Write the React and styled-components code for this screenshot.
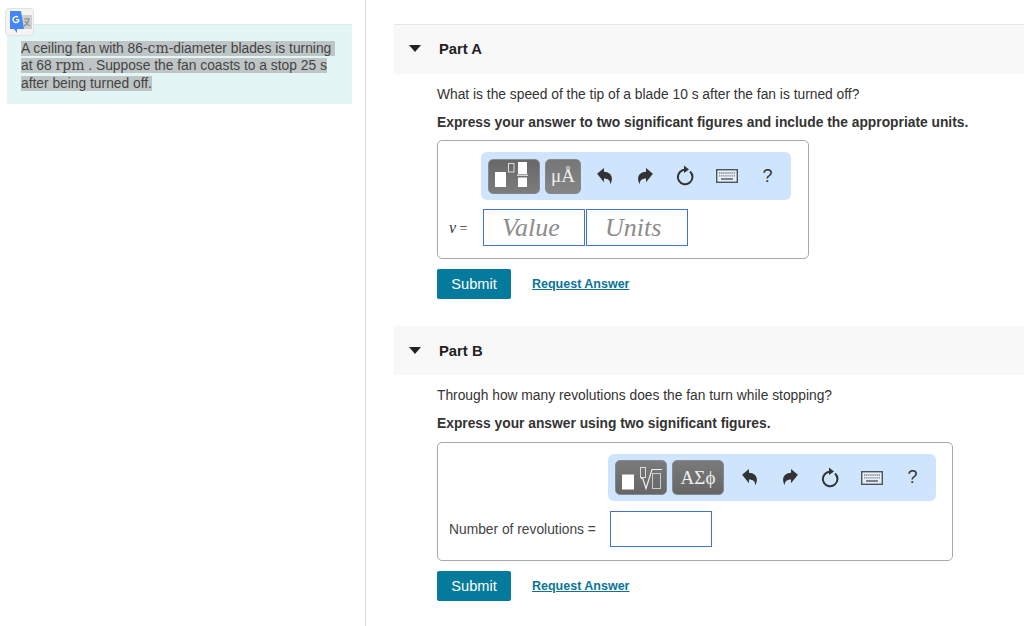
import React from "react";
import styled, { createGlobalStyle } from "styled-components";

const GlobalStyle = createGlobalStyle`
  html, body {
    margin: 0;
    padding: 0;
    background: #fff;
    overflow: hidden;
  }
  body {
    font-family: "Liberation Sans", Arial, sans-serif;
    font-size: 13.8px;
    color: #333;
  }
`;

const Page = styled.div`
  display: flex;
  height: 626px;
  width: 1024px;
  position: relative;
`;

const TranslateBadge = styled.div`
  position: absolute;
  left: 5px;
  top: 8px;
  width: 29px;
  height: 28px;
  box-sizing: border-box;
  background: #f4f4f4;
  border: 1px solid #e2e2e2;
  border-radius: 4px;
  display: flex;
  align-items: center;
  justify-content: center;
`;

const LeftColumn = styled.aside`
  width: 366px;
  flex: none;
  box-sizing: border-box;
  padding: 24px 13px 0 7px;
  border-right: 1px solid #d9d9d9;
`;

const ProblemBox = styled.div`
  height: 80px;
  box-sizing: border-box;
  padding: 15px 0 0 14px;
  background: #e4f5f6;
  border-top: 1px solid #dcebed;
  line-height: 17.4px;
  color: #444;
`;

const Selected = styled.span`
  background: #bfc4c4;
`;

const MathText = styled.span`
  font-family: "DejaVu Serif", "Liberation Serif", serif;
  font-size: 14px;
`;

const RightColumn = styled.main`
  flex: 1;
  padding: 24px 0 0 28px;
  min-width: 0;
`;

const PartHeader = styled.header`
  display: flex;
  align-items: center;
  height: ${(p) => p.$height}px;
  box-sizing: border-box;
  padding: 0 0 ${(p) => (p.$ruled ? 2 : 0)}px 15px;
  background: #f8f8f8;
  border-top: ${(p) => (p.$ruled ? "1px solid #e6e6e6" : "none")};
  font-size: 14.8px;
  font-weight: bold;
  color: #222;
`;

const Caret = styled.span`
  width: 0;
  height: 0;
  border-left: 6px solid transparent;
  border-right: 6px solid transparent;
  border-top: 7px solid #222;
  margin-right: 18px;
`;

const PartBody = styled.section`
  padding: 12px 0 27px 43px;
`;

const Prompt = styled.p`
  margin: 0;
  line-height: 18px;
  color: #333;
`;

const Instruction = styled.p`
  margin: 10px 0 ${(p) => p.$bottom}px;
  line-height: 18px;
  font-weight: bold;
  color: #333;
`;

const AnswerBox = styled.div`
  width: ${(p) => p.$width}px;
  height: ${(p) => p.$height}px;
  box-sizing: border-box;
  padding: 11px 0 0 11px;
  border: 1px solid #a8a8a8;
  border-radius: 5px;
`;

const Toolbar = styled.div`
  display: flex;
  align-items: center;
  width: ${(p) => p.$width}px;
  height: ${(p) => p.$height}px;
  box-sizing: border-box;
  margin-left: ${(p) => p.$offset}px;
  padding-left: 7px;
  background: #cfe5fd;
  border-radius: 6px;
`;

const ToolButton = styled.div`
  display: flex;
  align-items: center;
  justify-content: center;
  width: ${(p) => p.$width}px;
  height: 35px;
  box-sizing: border-box;
  margin-right: 5px;
  background: linear-gradient(${(p) => p.$from}, ${(p) => p.$to});
  border: 1px solid #85898d;
  border-radius: 5px;
  color: #eee;
  font-family: "Liberation Serif", serif;
  font-size: 19px;
`;

const ToolIcons = styled.div`
  display: flex;
  align-items: center;
  margin-left: ${(p) => p.$offset}px;
`;

const IconSlot = styled.div`
  width: 40.8px;
  display: flex;
  justify-content: center;
  align-items: center;
  color: #333;
  font-size: 18px;
`;

const InputRow = styled.div`
  display: flex;
  align-items: center;
  margin-top: ${(p) => p.$top}px;
`;

const Variable = styled.span`
  width: 34px;
  font-family: "Liberation Serif", serif;
  font-size: 14px;
  color: #333;
  i {
    font-size: 16px;
  }
`;

const RowLabel = styled.span`
  width: 161px;
  color: #444;
`;

const FieldInput = styled.input`
  width: 102px;
  height: ${(p) => p.$height}px;
  box-sizing: border-box;
  margin: 0 1px 0 0;
  padding: 0 0 0 18px;
  border: 1px solid #3f73d6;
  border-radius: 0;
  outline: none;
  background: #fff;
  font-family: "Liberation Serif", serif;
  font-style: italic;
  font-size: 26px;
  &::placeholder {
    color: #8c8c8c;
    opacity: 1;
  }
`;

const Actions = styled.div`
  display: flex;
  align-items: center;
  margin-top: 10px;
`;

const SubmitButton = styled.button`
  width: 74px;
  height: 30px;
  padding: 0;
  border: none;
  border-radius: 2px;
  background: #047a9c;
  color: #fff;
  font-family: "Liberation Sans", Arial, sans-serif;
  font-size: 14.6px;
`;

const RequestLink = styled.a`
  margin-left: 21px;
  color: #0a7596;
  font-size: 12.5px;
  font-weight: bold;
  text-decoration: underline;
`;

const TranslateIcon = () => (
  <svg width="24" height="24" viewBox="0 0 24 24">
    <path d="M12 5h12v14H12z" fill="#cfcfcf" />
    <path d="M16 9h6M19 8v1.500M21 9c-1 4-3 6-5 7M17 11c1 2 3 4 5 5" stroke="#8b8b8b" strokeWidth="1.200" fill="none" />
    <path d="M2 1h11l3 18H9v4l-3-4H2z" fill="#4285f4" />
    <path d="M11 9.500a3 3 0 1 1-1-2.200" stroke="#fff" strokeWidth="1.400" fill="none" />
    <path d="M8 9.700h3" stroke="#fff" strokeWidth="1.200" />
  </svg>
);

const TemplateIcon = () => (
  <svg width="40" height="28" viewBox="0 0 40 28">
    <path d="M1 10h11v15H1zM24 0h9v12H24zM24 15.500h9v9.500H24z" fill="#fff" />
    <path d="M23 13.200h11" stroke="#eee" strokeWidth="1.200" />
    <rect x="14.500" y="1.500" width="5.500" height="8.500" fill="none" stroke="#ddd" />
  </svg>
);

const RootIcon = () => (
  <svg width="44" height="28" viewBox="0 0 44 28">
    <path d="M3 10.500h12v15H3z" fill="#fff" />
    <rect x="21.500" y="3.500" width="5" height="10" fill="none" stroke="#ddd" />
    <path d="M22 14l2 1 3 9.500 6-19h10" fill="none" stroke="#eee" strokeWidth="1.200" />
    <rect x="33.500" y="9.500" width="8" height="15" fill="none" stroke="#ccc" />
  </svg>
);

const UndoIcon = () => (
  <svg width="17" height="19" viewBox="0 0 16 18">
    <path d="M1 6.500L7.500 1v3.500c4.500 0 7.500 3 7.500 6.500 0 2-.5 3.500-1.500 5.500 0-3.500-2-5.500-6-5.500v3.500z" fill="#333" />
  </svg>
);

const RedoIcon = () => (
  <svg width="17" height="19" viewBox="0 0 16 18">
    <path d="M15 6.500L8.500 1v3.500c-4.500 0-7.500 3-7.500 6.500 0 2 .5 3.500 1.500 5.500 0-3.500 2-5.500 6-5.500v3.500z" fill="#333" />
  </svg>
);

const ResetIcon = () => (
  <svg width="20" height="22" viewBox="0 0 20 22">
    <path d="M14 6.500A7.300 7.300 0 1 1 6.500 5.200L10 4.500" fill="none" stroke="#333" strokeWidth="2" />
    <path d="M8 0.500l5 4-5 3.500z" fill="#333" />
  </svg>
);

const KeyboardIcon = () => (
  <svg width="22" height="14" viewBox="0 0 22 14">
    <rect x="0.700" y="0.700" width="20.600" height="12.600" fill="#e8eff6" stroke="#4a5560" strokeWidth="1.400" />
    <path d="M3 4h16M3 6.800h16" stroke="#77818b" strokeWidth="1.300" strokeDasharray="1.300 .8" />
    <path d="M5 10h12" stroke="#4a5560" strokeWidth="1.400" />
  </svg>
);

const ToolActions = ({ offset }) => (
  <ToolIcons $offset={offset}>
    <IconSlot><UndoIcon /></IconSlot>
    <IconSlot><RedoIcon /></IconSlot>
    <IconSlot><ResetIcon /></IconSlot>
    <IconSlot><KeyboardIcon /></IconSlot>
    <IconSlot>?</IconSlot>
  </ToolIcons>
);

const SubmitRow = () => (
  <Actions>
    <SubmitButton type="button">Submit</SubmitButton>
    <RequestLink href="#">Request Answer</RequestLink>
  </Actions>
);

const App = () => {
  return (
    <>
      <GlobalStyle />
      <Page>
        <TranslateBadge>
          <TranslateIcon />
        </TranslateBadge>
        <LeftColumn>
          <ProblemBox>
            <Selected>A ceiling fan with 86-<MathText>cm</MathText>-diameter blades is turning&nbsp;</Selected>
            <br />
            <Selected>at 68 <MathText>rpm</MathText> . Suppose the fan coasts to a stop 25 <MathText>s</MathText></Selected>
            <br />
            <Selected>after being turned off.</Selected>
          </ProblemBox>
        </LeftColumn>
        <RightColumn>
          <PartHeader $height={50} $ruled>
            <Caret />
            Part A
          </PartHeader>
          <PartBody>
            <Prompt>What is the speed of the tip of a blade 10 s after the fan is turned off?</Prompt>
            <Instruction $bottom={8}>Express your answer to two significant figures and include the appropriate units.</Instruction>
            <AnswerBox $width={372} $height={119}>
              <Toolbar $width={310} $height={48} $offset={32}>
                <ToolButton $width={52} $from="#686868" $to="#7c7c7c"><TemplateIcon /></ToolButton>
                <ToolButton $width={36} $from="#767676" $to="#868686">μÅ</ToolButton>
                <ToolActions offset={-2} />
              </Toolbar>
              <InputRow $top={9}>
                <Variable><i>v</i> =</Variable>
                <FieldInput $height={37} placeholder="Value" />
                <FieldInput $height={37} placeholder="Units" />
              </InputRow>
            </AnswerBox>
            <SubmitRow />
          </PartBody>
          <PartHeader $height={49}>
            <Caret />
            Part B
          </PartHeader>
          <PartBody>
            <Prompt>Through how many revolutions does the fan turn while stopping?</Prompt>
            <Instruction $bottom={9}>Express your answer using two significant figures.</Instruction>
            <AnswerBox $width={516} $height={119}>
              <Toolbar $width={328} $height={47} $offset={159}>
                <ToolButton $width={52} $from="#7a7a7a" $to="#666666"><RootIcon /></ToolButton>
                <ToolButton $width={52} $from="#7a7a7a" $to="#666666">ΑΣϕ</ToolButton>
                <ToolActions offset={0} />
              </Toolbar>
              <InputRow $top={10}>
                <RowLabel>Number of revolutions =</RowLabel>
                <FieldInput $height={36} />
              </InputRow>
            </AnswerBox>
            <SubmitRow />
          </PartBody>
        </RightColumn>
      </Page>
    </>
  );
};

export default App;
